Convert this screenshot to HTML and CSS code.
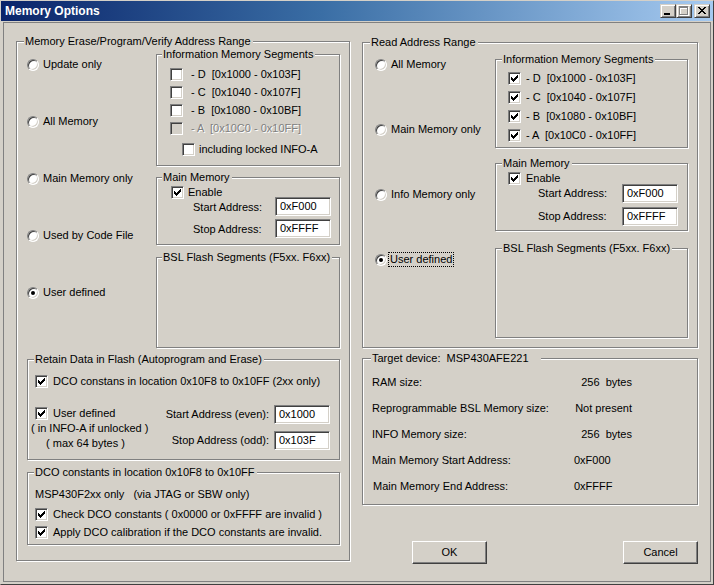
FILE: index.html
```html
<!DOCTYPE html>
<html>
<head>
<meta charset="utf-8">
<title>Memory Options</title>
<link rel="stylesheet" href="styles.css">
</head>
<body>
<div class="window">
  <div class="titlebar">
    <span class="title">Memory Options</span>
    <div class="tbtns">
      <span class="tbtn"><svg width="14" height="12" viewBox="0 0 14 12"><rect x="3" y="8" width="6" height="2" fill="#000"/></svg></span>
      <span class="tbtn"><svg width="14" height="12" viewBox="0 0 14 12" shape-rendering="crispEdges"><path d="M3 2h9v9h-9z M4 4v6h7v-6z" fill="#fff" fill-rule="evenodd"/><path d="M2 1h9v9h-9z M3 3v6h7v-6z" fill="#808080" fill-rule="evenodd"/></svg></span>
      <span class="tbtn close"><svg width="14" height="12" viewBox="0 0 14 12" shape-rendering="crispEdges"><path d="M3 2h2v1h1v1h2v-1h1v-1h2v1h-1v1h-1v1h-1v1h1v1h1v1h1v1h-2v-1h-1v-1h-2v1h-1v1h-2v-1h1v-1h1v-1h1v-1h-1v-1h-1v-1h-1z" fill="#000"/></svg></span>
    </div>
  </div>
  <div class="client">
    <fieldset class="fs erase">
      <legend class="lg mneg">Memory Erase/Program/Verify Address Range</legend>
      <div class="erase-top">
        <div class="radios rl">
          <div class="opt"><span class="radio"></span><span>Update only</span></div>
          <div class="opt"><span class="radio"></span><span>All Memory</span></div>
          <div class="opt"><span class="radio"></span><span>Main Memory only</span></div>
          <div class="opt"><span class="radio"></span><span>Used by Code File</span></div>
          <div class="opt"><span class="radio on"></span><span>User defined</span></div>
        </div>
        <div class="subcol sl">
          <fieldset class="fs info-l">
            <legend class="lg m5">Information Memory Segments</legend>
            <div class="segs segs-l">
              <div class="chk seg"><span class="cb"></span><span class="pre">- D  [0x1000 - 0x103F]</span></div>
              <div class="chk seg"><span class="cb"></span><span class="pre">- C  [0x1040 - 0x107F]</span></div>
              <div class="chk seg"><span class="cb"></span><span class="pre">- B  [0x1080 - 0x10BF]</span></div>
              <div class="chk seg dis"><span class="cb"></span><span class="pre">- A  [0x10C0 - 0x10FF]</span></div>
              <div class="chk incl"><span class="cb"></span><span>including locked INFO-A</span></div>
            </div>
          </fieldset>
          <fieldset class="fs main-l">
            <legend class="lg m5">Main Memory</legend>
            <div class="chk en-l"><span class="cb"><svg class="ck" width="7" height="7" viewBox="0 0 7 7" shape-rendering="crispEdges"><path d="M0 2H1V3H2V4H3V3H4V2H5V1H6V0H7V3H6V4H5V5H4V6H3V7H2V6H1V5H0Z"/></svg></span><span>Enable</span></div>
            <div class="addr addr-l">
              <span class="al">Start Address:</span><span class="tb">0xF000</span>
              <span class="al">Stop Address:</span><span class="tb">0xFFFF</span>
            </div>
          </fieldset>
          <fieldset class="fs bsl-l">
            <legend class="lg m5">BSL Flash Segments (F5xx. F6xx)</legend>
          </fieldset>
        </div>
      </div>
      <fieldset class="fs retain">
        <legend class="lg m6">Retain Data in Flash (Autoprogram and Erase)</legend>
        <div class="chk r1"><span class="cb"><svg class="ck" width="7" height="7" viewBox="0 0 7 7" shape-rendering="crispEdges"><path d="M0 2H1V3H2V4H3V3H4V2H5V1H6V0H7V3H6V4H5V5H4V6H3V7H2V6H1V5H0Z"/></svg></span><span>DCO constans in location 0x10F8 to 0x10FF (2xx only)</span></div>
        <div class="r2">
          <div class="r2-left">
            <div class="chk ud"><span class="cb"><svg class="ck" width="7" height="7" viewBox="0 0 7 7" shape-rendering="crispEdges"><path d="M0 2H1V3H2V4H3V3H4V2H5V1H6V0H7V3H6V4H5V5H4V6H3V7H2V6H1V5H0Z"/></svg></span><span>User defined</span></div>
            <div class="p1">( in INFO-A if unlocked )</div>
            <div class="p2">( max 64 bytes )</div>
          </div>
          <div class="r2-right">
            <span class="ral">Start Address (even):</span><span class="tb">0x1000</span>
            <span class="ral">Stop Address (odd):</span><span class="tb">0x103F</span>
          </div>
        </div>
      </fieldset>
      <fieldset class="fs dco">
        <legend class="lg m6">DCO constants in location 0x10F8 to 0x10FF</legend>
        <div class="d1">MSP430F2xx only   (via JTAG or SBW only)</div>
        <div class="chk d2"><span class="cb"><svg class="ck" width="7" height="7" viewBox="0 0 7 7" shape-rendering="crispEdges"><path d="M0 2H1V3H2V4H3V3H4V2H5V1H6V0H7V3H6V4H5V5H4V6H3V7H2V6H1V5H0Z"/></svg></span><span>Check DCO constants ( 0x0000 or 0xFFFF are invalid )</span></div>
        <div class="chk d3"><span class="cb"><svg class="ck" width="7" height="7" viewBox="0 0 7 7" shape-rendering="crispEdges"><path d="M0 2H1V3H2V4H3V3H4V2H5V1H6V0H7V3H6V4H5V5H4V6H3V7H2V6H1V5H0Z"/></svg></span><span>Apply DCO calibration if the DCO constants are invalid.</span></div>
      </fieldset>
    </fieldset>

    <div class="rcol">
      <fieldset class="fs read">
        <legend class="lg m7">Read Address Range</legend>
        <div class="read-body">
          <div class="radios rr">
            <div class="opt"><span class="radio"></span><span>All Memory</span></div>
            <div class="opt"><span class="radio"></span><span>Main Memory only</span></div>
            <div class="opt"><span class="radio"></span><span>Info Memory only</span></div>
            <div class="opt"><span class="radio on"></span><span class="focus">User defined</span></div>
          </div>
          <div class="subcol sr">
            <fieldset class="fs info-r">
              <legend class="lg m6">Information Memory Segments</legend>
              <div class="segs segs-r">
                <div class="chk seg"><span class="cb"><svg class="ck" width="7" height="7" viewBox="0 0 7 7" shape-rendering="crispEdges"><path d="M0 2H1V3H2V4H3V3H4V2H5V1H6V0H7V3H6V4H5V5H4V6H3V7H2V6H1V5H0Z"/></svg></span><span class="pre">- D  [0x1000 - 0x103F]</span></div>
                <div class="chk seg"><span class="cb"><svg class="ck" width="7" height="7" viewBox="0 0 7 7" shape-rendering="crispEdges"><path d="M0 2H1V3H2V4H3V3H4V2H5V1H6V0H7V3H6V4H5V5H4V6H3V7H2V6H1V5H0Z"/></svg></span><span class="pre">- C  [0x1040 - 0x107F]</span></div>
                <div class="chk seg"><span class="cb"><svg class="ck" width="7" height="7" viewBox="0 0 7 7" shape-rendering="crispEdges"><path d="M0 2H1V3H2V4H3V3H4V2H5V1H6V0H7V3H6V4H5V5H4V6H3V7H2V6H1V5H0Z"/></svg></span><span class="pre">- B  [0x1080 - 0x10BF]</span></div>
                <div class="chk seg"><span class="cb"><svg class="ck" width="7" height="7" viewBox="0 0 7 7" shape-rendering="crispEdges"><path d="M0 2H1V3H2V4H3V3H4V2H5V1H6V0H7V3H6V4H5V5H4V6H3V7H2V6H1V5H0Z"/></svg></span><span class="pre">- A  [0x10C0 - 0x10FF]</span></div>
              </div>
            </fieldset>
            <fieldset class="fs main-r">
              <legend class="lg m6">Main Memory</legend>
              <div class="chk en-r"><span class="cb"><svg class="ck" width="7" height="7" viewBox="0 0 7 7" shape-rendering="crispEdges"><path d="M0 2H1V3H2V4H3V3H4V2H5V1H6V0H7V3H6V4H5V5H4V6H3V7H2V6H1V5H0Z"/></svg></span><span>Enable</span></div>
              <div class="addr addr-r">
                <span class="al">Start Address:</span><span class="tb">0xF000</span>
                <span class="al">Stop Address:</span><span class="tb">0xFFFF</span>
              </div>
            </fieldset>
            <fieldset class="fs bsl-r">
              <legend class="lg m6">BSL Flash Segments (F5xx. F6xx)</legend>
            </fieldset>
          </div>
        </div>
      </fieldset>

      <fieldset class="fs target">
        <legend class="lg m8 tl">Target device:  MSP430AFE221</legend>
        <div class="tgrid">
          <span>RAM size:</span><span class="vr">256  bytes</span>
          <span>Reprogrammable BSL Memory size:</span><span class="vr">Not present</span>
          <span>INFO Memory size:</span><span class="vr">256  bytes</span>
          <span>Main Memory Start Address:</span><span>0xF000</span>
          <span class="last">Main Memory End Address:</span><span>0xFFFF</span>
        </div>
      </fieldset>

      <div class="buttons">
        <span class="btn">OK</span>
        <span class="btn">Cancel</span>
      </div>
    </div>
  </div>
</div>
</body>
</html>
```

FILE: styles.css
```css
* { box-sizing: border-box; }
body {
  margin: 0;
  font: 11px/13px "Liberation Sans", Arial, sans-serif;
  color: #000;
  background: #d4d0c8;
}
.window {
  width: 714px;
  height: 585px;
  border: 1px solid;
  border-color: #d4d0c8 #404040 #404040 #d4d0c8;
  background: #d4d0c8;
  display: flex;
  flex-direction: column;
}
.titlebar {
  height: 20px;
  flex: none;
  display: flex;
  align-items: center;
  padding: 0 3px 0 4px;
  background: linear-gradient(90deg, #0a246a 0%, #3a6ea5 45%, #a6caf0 100%);
  color: #fff;
}
.title { font-weight: bold; font-size: 12px; }
.tbtns { margin-left: auto; display: flex; }
.tbtn {
  width: 16px;
  height: 14px;
  border: 1px solid;
  border-color: #d4d0c8 #404040 #404040 #d4d0c8;
  box-shadow: inset 1px 1px 0 #fff, inset -1px -1px 0 #808080;
  background: #d4d0c8;
  display: block;
}
.tbtn svg { display: block; }
.tbtn.close { margin-left: 2px; }

.client {
  flex: 1;
  margin: 1px 2px 2px;
  border: 1px solid #808080;
  display: grid;
  grid-template-columns: 334px 336px;
  column-gap: 12px;
  padding: 12px 12px 0;
  align-items: start;
}

/* group boxes */
.fs {
  margin: 0;
  padding: 0;
  border: 1px solid #808080;
  box-shadow: 1px 1px 0 #fff, inset 1px 1px 0 #fff;
  min-inline-size: 0;
}
.lg {
  padding: 0 2px 0 1px;
  line-height: 13px;
  background: #d4d0c8;
  white-space: pre;
}
.mneg { margin-left: -3px; }
.m5 { margin-left: 5px; }
.m6 { margin-left: 6px; }
.m7 { margin-left: 7px; }
.m8 { margin-left: 8px; }
.tl { padding-right: 12px; }

/* controls */
.opt { display: flex; align-items: center; height: 13px; gap: 4px; }
.radio {
  width: 12px;
  height: 12px;
  flex: none;
  border-radius: 50%;
  border: 1px solid;
  border-color: #808080 #fff #fff #808080;
  background: #fff;
  box-shadow: inset 1px 1px 0 #404040, inset -1px -1px 0 #d4d0c8;
  position: relative;
}
.radio.on::after {
  content: "";
  position: absolute;
  left: 3px;
  top: 3px;
  width: 4px;
  height: 4px;
  border-radius: 50%;
  background: #000;
}
.focus { outline: 1px dotted #000; padding: 0 1px; margin-left: -2px; }

.chk { display: flex; align-items: center; height: 13px; gap: 5px; }
.cb {
  width: 13px;
  height: 13px;
  flex: none;
  border: 1px solid;
  border-color: #808080 #fff #fff #808080;
  box-shadow: inset 1px 1px 0 #404040, inset -1px -1px 0 #d4d0c8;
  background: #fff;
  display: flex;
  align-items: center;
  justify-content: center;
}
.ck { display: block; fill: #000; }
.pre { white-space: pre; }
.dis .cb { background: #d4d0c8; }
.dis span:last-child { color: #808080; text-shadow: 1px 1px 0 #fff; }

.tb {
  width: 56px;
  height: 19px;
  border: 1px solid;
  border-color: #808080 #fff #fff #808080;
  box-shadow: inset 1px 1px 0 #404040, inset -1px -1px 0 #d4d0c8;
  background: #fff;
  padding-left: 4px;
  line-height: 17px;
}

.btn {
  width: 75px;
  height: 23px;
  border: 1px solid;
  border-color: #fff #404040 #404040 #fff;
  box-shadow: inset -1px -1px 0 #808080;
  background: #d4d0c8;
  display: flex;
  align-items: center;
  justify-content: center;
}

/* left: erase group */
.erase { height: 526px; padding: 0 9px 0 10px; }
.erase-top { display: flex; }
.radios { display: flex; flex-direction: column; }
.rl { width: 129px; padding-top: 10px; gap: 44px; }
.sl { width: 184px; display: flex; flex-direction: column; }
.info-l { height: 118px; }
.segs { display: flex; flex-direction: column; }
.segs-l { padding: 7px 0 0 13px; gap: 5px; }
.segs-l .seg { gap: 8px; }
.incl { margin-top: 3px; padding-left: 12px; gap: 4px; }
.main-l { height: 74px; margin-top: 5px; }
.en-l { margin-top: 2px; padding-left: 14px; gap: 4px; }
.addr { display: grid; }
.addr-l {
  grid-template-columns: 82px 56px;
  row-gap: 3px;
  margin-top: -2px;
  padding-left: 36px;
}
.addr-l .al { padding-top: 4px; }
.bsl-l { height: 97px; margin-top: 6px; }

.retain { height: 107px; margin-top: 5px; }
.r1 { margin-top: 9px; padding-left: 7px; }
.r2 { display: flex; justify-content: space-between; margin-top: 16px; padding-right: 9px; }
.r2-left { padding-top: 3px; }
.ud { padding-left: 7px; }
.p1 { line-height: 15px; padding-left: 3px; margin-top: 1px; }
.p2 { line-height: 15px; padding-left: 18px; }
.r2-right {
  display: grid;
  grid-template-columns: auto 56px;
  column-gap: 5px;
  row-gap: 6px;
  align-items: center;
  justify-items: end;
}

.dco { height: 79px; margin-top: 6px; }
.d1 { margin-top: 9px; padding-left: 7px; white-space: pre; }
.d2 { margin-top: 7px; padding-left: 7px; }
.d3 { margin-top: 5px; padding-left: 7px; }

/* right column */
.rcol { display: flex; flex-direction: column; }
.read { height: 312px; margin-top: 1px; }
.read-body { display: flex; }
.rr { width: 132px; padding: 9px 0 0 12px; gap: 52px; }
.sr { width: 193px; padding-top: 4px; display: flex; flex-direction: column; }
.info-r { height: 95px; }
.segs-r { padding: 6px 0 0 12px; gap: 6px; }
.main-r { height: 74px; margin-top: 9px; }
.en-r { margin-top: 2px; padding-left: 12px; }
.addr-r {
  grid-template-columns: 84px 56px;
  row-gap: 4px;
  margin-top: -1px;
  padding-left: 42px;
  align-items: center;
}
.bsl-r { height: 96px; margin-top: 11px; }

.target { height: 153px; margin-top: 4px; }
.tgrid {
  display: grid;
  grid-template-columns: 202px 58px;
  row-gap: 13px;
  padding: 11px 0 0 9px;
  white-space: pre;
}
.vr { text-align: right; }
.last { padding-left: 1px; }

.buttons {
  margin-top: 36px;
  display: flex;
  justify-content: space-between;
  padding-left: 50px;
}
```
